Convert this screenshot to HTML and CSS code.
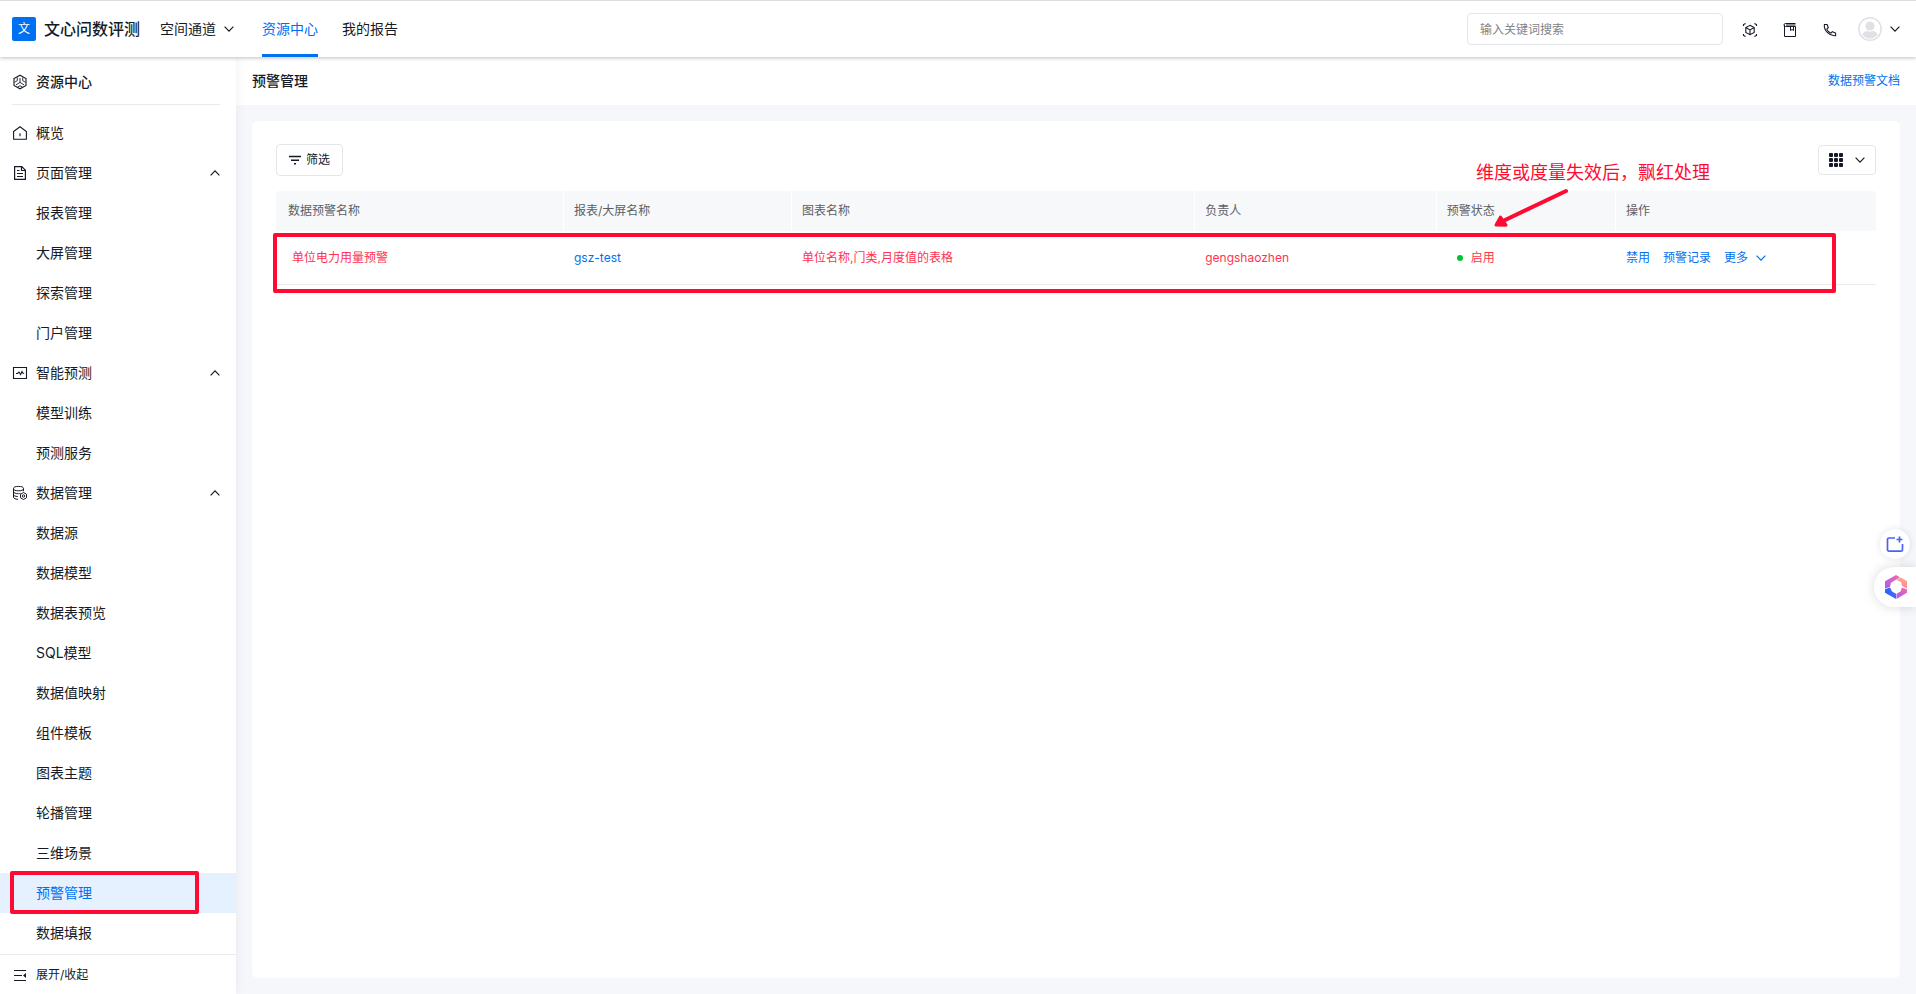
FILE: index.html
```html
<!DOCTYPE html>
<html lang="zh-CN">
<head>
<meta charset="utf-8">
<title>预警管理</title>
<link rel="stylesheet" href="styles.css">
</head>
<body>
<svg class="defs" aria-hidden="true">
  <symbol id="chevron" viewBox="0 0 10 6"><path d="M.6.7 5 5.1 9.4.7" fill="none" stroke="currentColor" stroke-width="1.2"/></symbol>
</svg>

<header class="topbar">
  <div class="logo">文</div>
  <div class="brand">文心问数评测</div>
  <button class="space-switch" type="button">空间通道<svg class="chev"><use href="#chevron"/></svg></button>
  <nav class="tabs">
    <a class="tab tab-active" href="#">资源中心</a>
    <a class="tab" href="#">我的报告</a>
  </nav>
  <input class="search" type="search" placeholder="输入关键词搜索" aria-label="搜索">
  <div class="tools">
    <button type="button" class="tool" aria-label="三维视图">
      <svg width="16" height="16" viewBox="0 0 16 16" fill="none" stroke="currentColor" stroke-width="1.1"><path d="M1.500 4V2.600L3.600 1.400M12.400 1.400l2.100 1.200V4M1.500 12v1.400l2.100 1.200M12.400 14.600l2.100-1.200V12"/><path d="M8 3.300 12.200 5.600v4.800L8 12.700 3.800 10.400V5.600zM3.800 5.600 8 7.900l4.200-2.300M8 7.900v4.800"/></svg>
    </button>
    <button type="button" class="tool" aria-label="文档">
      <svg width="16" height="16" viewBox="0 0 16 16" fill="none" stroke="currentColor" stroke-width="1"><path d="M13.500 1.500H3.500a1.500 1.500 0 0 0 0 3h10v10h-11V3M4 3h9.500M8.500 4.500v4l1.500-1 1.500 1v-4"/></svg>
    </button>
    <button type="button" class="tool" aria-label="电话">
      <svg width="16" height="16" viewBox="0 0 16 16" fill="none" stroke="currentColor" stroke-width="1.1"><path d="M2.400 2.500h2.700l1.200 3.200-1.500 1.400c.8 1.900 2.200 3.300 4.100 4.100l1.400-1.500 3.300 1.300v2.600c-3 .4-6-.9-8.100-3C3.300 8.500 2 5.500 2.400 2.500z"/></svg>
    </button>
  </div>
  <button type="button" class="account" aria-label="账户">
    <svg width="24" height="24" viewBox="0 0 24 24"><circle cx="12" cy="12" r="11.200" fill="#fff" stroke="#dfe1e5" stroke-width="1.500"/><circle cx="12" cy="9" r="4.600" fill="#dfe1e5"/><path d="M4.200 17.500c1.300-2.500 3.200-3.400 5-3.600 1.700 1.100 3.900 1.100 5.600 0 1.800.2 3.700 1.100 5 3.600-1.800 2.400-4.600 3.900-7.800 3.900s-6-1.500-7.800-3.900z" fill="#dfe1e5"/></svg>
    <svg class="chev"><use href="#chevron"/></svg>
  </button>
</header>

<div class="body">
  <aside class="sidebar">
    <h2 class="side-title">
      <svg width="16" height="16" viewBox="0 0 16 16" fill="none" stroke="currentColor" stroke-width="1.100"><path d="M8 1.200 14 4.600v6.800L8 14.800 2 11.400V4.600z"/><path d="M8 4v4.400l-4 2.400M8 8.400l4 2.400M5.300 3.500v3.200L2.500 8.300M10.700 3.500v3.200l2.800 1.600M5.500 13.200 8 11.700l2.500 1.500" stroke-width=".9"/></svg>
      资源中心
    </h2>
    <nav class="menu">
      <a class="item" href="#"><svg width="16" height="16" viewBox="0 0 16 16" fill="none" stroke="currentColor" stroke-width="1.100"><path d="M1.600 6.500 8 1.700l6.400 4.800v7.800H1.600zM8 8.200v3"/></svg>概览</a>
      <button type="button" class="item"><svg width="16" height="16" viewBox="0 0 16 16" fill="none" stroke="currentColor" stroke-width="1.200"><path d="M2.600 1.600h7.200l3.600 3.600v9.200H2.600zM9.500 1.800v3.700h3.700M5 5.500h2.500M5 8.500h6M5 11.500h6"/></svg>页面管理<svg class="chev up"><use href="#chevron"/></svg></button>
      <a class="item sub" href="#">报表管理</a>
      <a class="item sub" href="#">大屏管理</a>
      <a class="item sub" href="#">探索管理</a>
      <a class="item sub" href="#">门户管理</a>
      <button type="button" class="item"><svg width="16" height="16" viewBox="0 0 16 16" fill="none" stroke="currentColor" stroke-width="1.100"><path d="M1.500 2.500h13v11h-13zM4 8.500h1.500L7 7l1.600 2.500L10 6.500l.9 1.800h1.300"/></svg>智能预测<svg class="chev up"><use href="#chevron"/></svg></button>
      <a class="item sub" href="#">模型训练</a>
      <a class="item sub" href="#">预测服务</a>
      <button type="button" class="item"><svg width="16" height="16" viewBox="0 0 16 16" fill="none" stroke="currentColor" stroke-width="1"><ellipse cx="6.500" cy="3.600" rx="5" ry="2.200"/><path d="M1.500 3.600v8.500c0 1.200 1.800 2.200 4.500 2.200M11.500 3.600v2.600M1.500 6.500c0 1.300 2 2.200 4.800 2.200M1.500 9.400c0 1.200 1.800 2.100 4.300 2.100M6.500 8.700c.8 0 1.500-.1 2-.3"/><path d="m11.500 7.500 3 1.700v3.600l-3 1.700-3-1.700V9.200z"/><circle cx="11.500" cy="11" r="1.200"/></svg>数据管理<svg class="chev up"><use href="#chevron"/></svg></button>
      <a class="item sub" href="#">数据源</a>
      <a class="item sub" href="#">数据模型</a>
      <a class="item sub" href="#">数据表预览</a>
      <a class="item sub" href="#">SQL模型</a>
      <a class="item sub" href="#">数据值映射</a>
      <a class="item sub" href="#">组件模板</a>
      <a class="item sub" href="#">图表主题</a>
      <a class="item sub" href="#">轮播管理</a>
      <a class="item sub" href="#">三维场景</a>
      <a class="item sub selected" href="#">预警管理<span class="mark mark-item"></span></a>
      <a class="item sub" href="#">数据填报</a>
    </nav>
    <button type="button" class="collapse"><svg width="16" height="16" viewBox="0 0 16 16" fill="none" stroke="currentColor" stroke-width="1"><path d="M2 3.500h12M2 8.500h8M2 13.500h12"/><path d="M14 6v5l-3-2.500z" fill="currentColor" stroke="none"/></svg>展开/收起</button>
  </aside>

  <main class="main">
    <div class="page-head">
      <h1>预警管理</h1>
      <a class="link" href="#">数据预警文档</a>
    </div>
    <section class="card">
      <div class="toolbar">
        <button type="button" class="btn"><svg width="14" height="12" viewBox="0 0 14 12" stroke="currentColor" stroke-width="1.400"><path d="M1 2.500h12M3 6.200h8M6 9.800h2"/></svg>筛选</button>
        <button type="button" class="btn btn-grid" aria-label="列设置"><svg width="16" height="16" viewBox="0 0 16 16" fill="currentColor"><rect x="1" y="1" width="4" height="4" rx="1"/><rect x="6" y="1" width="4" height="4" rx="1"/><rect x="11" y="1" width="4" height="4" rx="1"/><rect x="1" y="6" width="4" height="4" rx="1"/><rect x="6" y="6" width="4" height="4" rx="1"/><rect x="11" y="6" width="4" height="4" rx="1"/><rect x="1" y="11" width="4" height="4" rx="1"/><rect x="6" y="11" width="4" height="4" rx="1"/><rect x="11" y="11" width="4" height="4" rx="1"/></svg><svg class="chev"><use href="#chevron"/></svg></button>
      </div>
      <div class="table-wrap">
        <table>
          <colgroup><col class="c-name"><col class="c-report"><col class="c-chart"><col class="c-owner"><col class="c-state"><col></colgroup>
          <thead><tr><th>数据预警名称</th><th>报表/大屏名称</th><th>图表名称</th><th>负责人</th><th>预警状态</th><th>操作</th></tr></thead>
          <tbody><tr>
            <td class="name">单位电力用量预警</td>
            <td><a class="link" href="#">gsz-test</a></td>
            <td>单位名称,门类,月度值的表格</td>
            <td>gengshaozhen</td>
            <td><span class="state">启用</span></td>
            <td><div class="actions"><a class="link" href="#">禁用</a><a class="link" href="#">预警记录</a><a class="link more" href="#">更多<svg class="chev"><use href="#chevron"/></svg></a></div></td>
          </tr></tbody>
        </table>
        <span class="mark mark-row"></span>
        <div class="note">维度或度量失效后，飘红处理
          <svg width="76" height="42" viewBox="0 0 76 42" fill="none" stroke="#ff0a33" stroke-linecap="round" stroke-linejoin="round"><path d="M73 3 8 34" stroke-width="4"/><path d="M7.500 29 3 37l10 .2z" fill="#ff0a33" stroke-width="3"/></svg>
        </div>
      </div>
    </section>
  </main>
</div>

<div class="floating">
  <button type="button" class="float-add" aria-label="新建"><svg width="18" height="18" viewBox="0 0 18 18" fill="none" stroke="#4b62f0" stroke-width="1.700"><path d="M9 3H3a1.500 1.500 0 0 0-1.500 1.500v10.200a1.500 1.500 0 0 0 1.500 1.500h12a1.500 1.500 0 0 0 1.500-1.500V9M13.500 1.500v6M10.500 4.500h6"/></svg></button>
  <button type="button" class="float-ai" aria-label="助手"><svg width="24" height="24" viewBox="0 0 24 24">
    <defs>
      <linearGradient id="g1" x1="0" y1="1" x2="1" y2="0"><stop offset="0" stop-color="#a95cf0"/><stop offset="1" stop-color="#f56aa8"/></linearGradient>
      <linearGradient id="g2" x1="0" y1="0" x2="0" y2="1"><stop offset="0" stop-color="#ffa58c"/><stop offset="1" stop-color="#ff8a98"/></linearGradient>
      <linearGradient id="g3" x1="0" y1="0" x2="1" y2="0"><stop offset="0" stop-color="#2468ff"/><stop offset="1" stop-color="#4a63fb"/></linearGradient>
    </defs>
    <path d="M1 6.300 12 0l4 2.200L7 7.800 6 12l-5 1.500z" fill="url(#g1)"/>
    <path d="m12 4.800 5-2.200 6 3.700v7.200l-5-2.500-1-4z" fill="url(#g2)"/>
    <path d="M1 14.300 6 12.500l2 4 4 2.300v5.200L1 17.700z" fill="url(#g3)"/>
    <path d="m12.500 18.800 4-2.300 1.500-4 5 2v3.200L12.500 24z" fill="url(#g1)"/>
  </svg></button>
</div>
</body>
</html>
```
FILE: styles.css
```css
* { box-sizing: border-box; }
body {
  margin: 0;
  height: 100vh;
  display: flex;
  flex-direction: column;
  overflow: hidden;
  background: #f6f7fa;
  color: #151b26;
  font: 14px/20px "Inter", "Noto Sans CJK SC", sans-serif;
}
a { color: inherit; text-decoration: none; }
button { font: inherit; color: inherit; background: none; border: 0; padding: 0; display: flex; align-items: center; cursor: pointer; }
h1, h2 { margin: 0; font-size: 14px; font-weight: 500; }
svg { flex: none; }
.defs { position: absolute; width: 0; height: 0; }
.chev { width: 10px; height: 6px; }
.up { transform: rotate(180deg); }
.link { color: #0071ee; font-size: 12px; }

.topbar {
  flex: none;
  position: relative;
  z-index: 2;
  display: flex;
  align-items: center;
  height: 57px;
  padding: 0 16px 0 12px;
  background: #fff;
  border-top: 1px solid #dedede;
  box-shadow: 0 1px 4px rgba(0, 0, 0, .25);
}
.logo { width: 24px; height: 24px; border-radius: 2px; background: #0070f3; color: #fff; font-size: 12px; line-height: 24px; text-align: center; }
.brand { margin: 0 20px 0 8px; font-size: 16px; font-weight: 500; }
.space-switch { gap: 8px; }
.tabs { display: flex; align-self: stretch; gap: 24px; margin-left: 28px; }
.tab { display: flex; align-items: center; border-bottom: 3px solid transparent; border-top: 3px solid transparent; }
.tab-active { color: #0070f3; border-bottom-color: #0070f3; }
.search { width: 256px; height: 32px; margin-left: auto; padding: 0 12px; border: 1px solid #e5e6e9; border-radius: 4px; font: inherit; font-size: 12px; outline: 0; }
.search::placeholder { color: #808388; opacity: 1; }
.tools { display: flex; gap: 24px; margin-left: 19px; padding-top: 2px; }
.account { gap: 8px; margin-left: 20px; }

.body { flex: 1; display: flex; min-height: 0; }
.sidebar { flex: none; width: 236px; display: flex; flex-direction: column; background: #fff; box-shadow: 0 0 12px rgba(0, 0, 0, .06); z-index: 1; }
.side-title { display: flex; align-items: center; gap: 8px; height: 48px; margin: 0 16px 8px 12px; padding-top: 2px; border-bottom: 1px solid #e8e9eb; }
.menu { flex: 1; min-height: 0; }
.item { position: relative; display: flex; align-items: center; gap: 8px; width: 100%; height: 40px; padding: 0 16px 0 12px; text-align: left; }
.item .up { margin-left: auto; }
.sub { padding-left: 36px; }
.selected { background: #e5f1ff; color: #0070f3; }
.collapse { flex: none; gap: 8px; height: 40px; padding: 0 12px; border-top: 1px solid #e8e9eb; font-size: 12px; }

.main { flex: 1; min-width: 0; display: flex; flex-direction: column; }
.page-head { display: flex; align-items: center; justify-content: space-between; height: 48px; padding: 0 16px; background: #fff; }
.card { flex: 1; margin: 16px; padding: 23px 24px; background: #fff; border-radius: 6px; }
.toolbar { display: flex; align-items: center; justify-content: space-between; margin-bottom: 15px; }
.btn { height: 32px; gap: 4px; padding: 0 12px 0 11px; border: 1px solid #e5e6e9; border-radius: 4px; font-size: 12px; }
.btn-grid { height: 30px; gap: 11px; padding: 0 10px 0 9px; }

.table-wrap { position: relative; }
table { width: 100%; table-layout: fixed; border-collapse: separate; border-spacing: 0; font-size: 12px; }
.c-name { width: 18%; }
.c-report { width: 14.25%; }
.c-chart { width: 25.2%; }
.c-owner { width: 15.1%; }
.c-state { width: 11.2%; }
th { height: 40px; padding: 0 10px; background: #f7f8fa; color: #5c5f66; font-weight: 400; text-align: left; border-right: 1px solid #fff; }
th:first-child { padding-left: 12px; border-radius: 4px 0 0 0; }
th:last-child { border-right: 0; border-radius: 0 4px 0 0; }
td { height: 54px; padding: 0 10px; color: #ff3350; border-bottom: 1px solid #e8e9eb; }
td.name { padding-left: 16px; }
.state { display: flex; align-items: center; gap: 8px; padding-left: 10px; }
.state::before { content: ""; width: 6px; height: 6px; border-radius: 50%; background: #00c233; }
.actions { display: flex; gap: 13px; }
.more { display: flex; align-items: center; gap: 8px; }

.mark { position: absolute; border: 4px solid #ff0a33; border-radius: 2px; pointer-events: none; }
.mark-item { left: 10px; right: 37px; top: -2px; bottom: -1px; }
.mark-row { left: -3px; right: 40px; top: 42px; bottom: -8px; }
.note { position: absolute; right: 166px; top: -31px; color: #ff0a33; font-size: 18px; line-height: 26px; pointer-events: none; }
.note svg { position: absolute; left: 17px; top: 28px; }

.floating { position: fixed; right: 0; top: 529px; z-index: 3; display: flex; flex-direction: column; align-items: flex-end; gap: 8px; }
.float-add { width: 30px; height: 30px; margin-right: 6px; justify-content: center; border-radius: 50%; background: #fff; box-shadow: 0 0 6px rgba(60, 70, 160, .15); }
.float-ai { width: 42px; height: 40px; padding-left: 10px; border-radius: 20px 0 0 20px; background: #fff; box-shadow: 0 0 12px rgba(0, 0, 0, .15); }
```
